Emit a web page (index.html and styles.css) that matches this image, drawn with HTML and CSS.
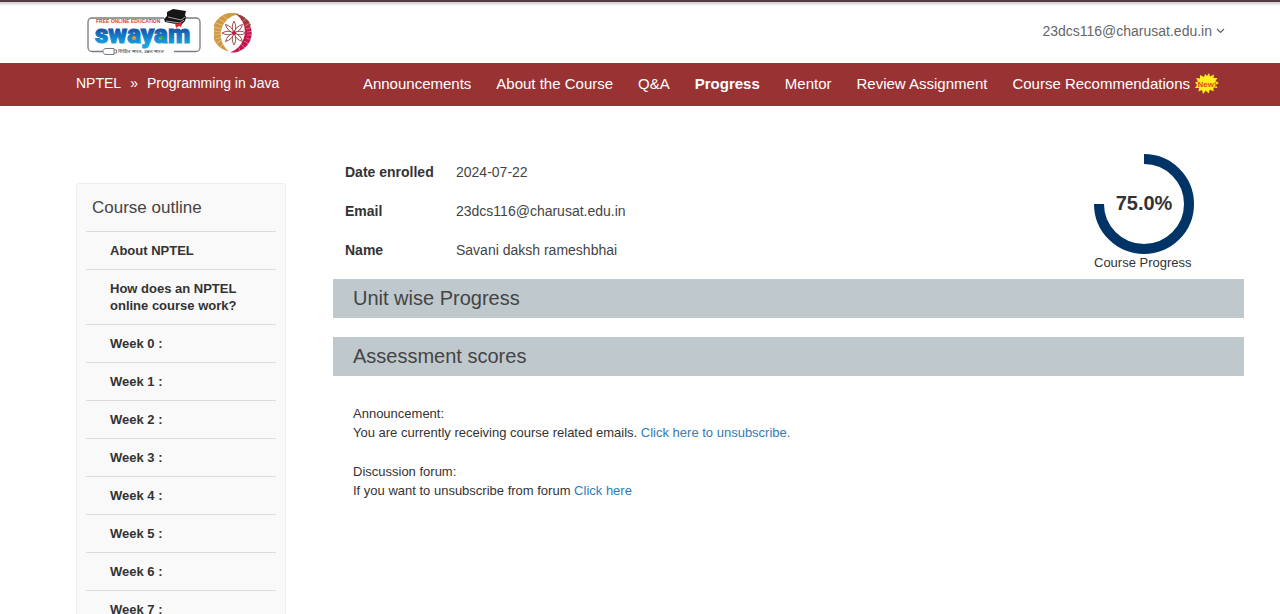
FILE: index.html
```html
<!DOCTYPE html>
<html lang="en">
<head>
<meta charset="utf-8">
<title>Programming in Java - Progress</title>
<link rel="stylesheet" href="styles.css">
</head>
<body>
<header class="topbar">
  <div class="brands">
    <a href="#" aria-label="Swayam">
      <svg class="logo-swayam" width="116" height="50" viewBox="0 0 116 50">
        <defs>
          <linearGradient id="blue" x1="0" y1="0" x2="0" y2="1">
            <stop offset="0.3" stop-color="#1a4fa0"/>
            <stop offset="0.55" stop-color="#1277c4"/>
            <stop offset="0.85" stop-color="#19a5e0"/>
          </linearGradient>
        </defs>
        <path d="M17 43.500H6a4 4 0 0 1-4-4V14a4 4 0 0 1 4-4h72M91 10h19a4 4 0 0 1 4 4v25.500a4 4 0 0 1-4 4H88" fill="none" stroke="#777b80" stroke-width="1.300"/>
        <path d="M20 40.500h8v6h-8c-4 0-4-6 0-6zM28 42h2.500v3H28" fill="#fff" stroke="#777b80"/>
        <text class="logo-tag" x="10" y="15">FREE ONLINE EDUCATION</text>
        <text class="logo-word" x="9" y="35">swayam</text>
        <circle cx="48" cy="30" r="2" fill="#f39322"/>
        <circle cx="76" cy="30" r="2" fill="#39a935"/>
        <text class="logo-hindi" x="32" y="45">शिक्षित भारत, उन्नत भारत</text>
        <path d="M81 4l6-3 13 2-1 4 1 2-1 4-4 4-16-3-1-3 3-3z" fill="#151515"/>
        <path d="M82 9l13 3 4-3M80 13l14 2 4-3" fill="none" stroke="#c5c5c5" stroke-width="0.800"/>
        <path d="M89 15l3 1 2-2 2 2-1 3-2-1-3 2z" fill="#e5262f"/>
      </svg>
    </a>
    <a href="#" aria-label="NPTEL">
      <svg class="logo-nptel" width="40" height="40" viewBox="0 0 40 40">
        <path d="M25 1A19.500 19.500 0 1 0 15 38.500A21 21 0 0 1 25 1z" fill="#cf9a45"/>
        <path d="M22 1A19.500 19.500 0 0 1 16 39.500A22 22 0 0 0 22 1z" fill="#c3164e"/>
        <path d="M22 1A19.500 19.500 0 0 1 37 12L32 15A22 22 0 0 0 22 1z" fill="#97413b"/>
        <g stroke="#fff" stroke-width="0.600" opacity="0.600">
          <path d="M0 14l8 2M0 18l7 1M0 22l7-1M1 26l7-2M3 30l6-4M6 34l5-5M2 10l8 3M5 6l6 4M9 3l5 4"/>
          <path d="M32 16l8-2M33 19l7-1M33 22l7 0M32 25l7 2M30 28l7 4M27 31l5 5M31 13l7-4M28 9l6-5M24 34l3 5"/>
        </g>
        <g fill="#fff" stroke="#96433f" stroke-width="0.900">
          <path d="M20 20q-3.500-6 0-12q3.500 6 0 12z"/>
          <path d="M20 20q-3.500-6 0-12q3.500 6 0 12z" transform="rotate(45 20 20)"/>
          <path d="M20 20q-3.500-6 0-12q3.500 6 0 12z" transform="rotate(90 20 20)"/>
          <path d="M20 20q-3.500-6 0-12q3.500 6 0 12z" transform="rotate(135 20 20)"/>
          <path d="M20 20q-3.500-6 0-12q3.500 6 0 12z" transform="rotate(180 20 20)"/>
          <path d="M20 20q-3.500-6 0-12q3.500 6 0 12z" transform="rotate(225 20 20)"/>
          <path d="M20 20q-3.500-6 0-12q3.500 6 0 12z" transform="rotate(270 20 20)"/>
          <path d="M20 20q-3.500-6 0-12q3.500 6 0 12z" transform="rotate(315 20 20)"/>
        </g>
        <circle cx="20" cy="20" r="2" fill="#c3164e"/>
      </svg>
    </a>
  </div>
  <button class="account" type="button">23dcs116@charusat.edu.in
    <svg width="9" height="6" viewBox="0 0 9 6"><path d="M1 1l3.500 3.500L8 1" fill="none" stroke="#666" stroke-width="1.200"/></svg>
  </button>
</header>

<div class="navbar">
  <div class="crumbs"><a href="#">NPTEL</a><span>»</span><a href="#">Programming in Java</a></div>
  <nav class="menu">
    <a href="#">Announcements</a>
    <a href="#">About the Course</a>
    <a href="#">Q&amp;A</a>
    <a href="#" class="active" aria-current="page">Progress</a>
    <a href="#">Mentor</a>
    <a href="#">Review Assignment</a>
    <a href="#" class="with-badge">Course Recommendations
      <svg width="24" height="22" viewBox="0 0 24 22">
        <path d="M12 3l2-3 1 3.500 4-2-.5 3.500 4 0-2 3 3.500 2-3.500 2 2 3-4-.5 0 4-3.500-2-1.500 4-2.500-3-3 3.500-1-4-3.500 1.500.5-3.500-4 0 2-3-2-2.500 3-1-2-3.500 4 .5 0-3.500 4 2 1-3z" fill="#ffed1f"/>
        <text class="badge-text" x="12" y="14" text-anchor="middle">New!</text>
      </svg>
    </a>
  </nav>
</div>

<div class="page">
  <aside class="outline">
    <h2>Course outline</h2>
    <ul>
      <li><a href="#">About NPTEL</a></li>
      <li><a href="#">How does an NPTEL online course work?</a></li>
      <li><a href="#">Week 0 :</a></li>
      <li><a href="#">Week 1 :</a></li>
      <li><a href="#">Week 2 :</a></li>
      <li><a href="#">Week 3 :</a></li>
      <li><a href="#">Week 4 :</a></li>
      <li><a href="#">Week 5 :</a></li>
      <li><a href="#">Week 6 :</a></li>
      <li><a href="#">Week 7 :</a></li>
    </ul>
  </aside>

  <main class="content">
    <section class="summary">
      <dl class="details">
        <dt>Date enrolled</dt><dd>2024-07-22</dd>
        <dt>Email</dt><dd>23dcs116@charusat.edu.in</dd>
        <dt>Name</dt><dd>Savani daksh rameshbhai</dd>
      </dl>
      <figure class="progress">
        <svg width="100" height="100" viewBox="0 0 100 100" role="img" aria-label="75.0%">
          <path d="M50 5A45 45 0 1 1 5 50" fill="none" stroke="#003366" stroke-width="10"/>
          <text class="percent" x="50" y="56" text-anchor="middle">75.0%</text>
        </svg>
        <figcaption>Course Progress</figcaption>
      </figure>
    </section>
    <h2 class="band">Unit wise Progress</h2>
    <h2 class="band">Assessment scores</h2>
    <section class="notices">
      <p>Announcement:<br>You are currently receiving course related emails. <a href="#">Click here to unsubscribe.</a></p>
      <p>Discussion forum:<br>If you want to unsubscribe from forum <a href="#">Click here</a></p>
    </section>
  </main>
</div>
</body>
</html>
```
FILE: styles.css
```css
* { box-sizing: border-box; }

body {
  margin: 0;
  background: #fff;
  color: #333;
  font-family: "Liberation Sans", Arial, sans-serif;
  font-size: 13px;
}

a { text-decoration: none; }
svg { display: block; }
h2, ul, dl, dd, p, figure { margin: 0; padding: 0; font-weight: normal; }

.topbar {
  display: flex;
  justify-content: space-between;
  align-items: center;
  height: 63px;
  padding: 0 55px 0 86px;
  border-top: 2px solid #523c46;
  background: linear-gradient(#ccc, #fff 4px);
}
.brands { display: flex; align-items: center; gap: 12px; }
.logo-tag { font-size: 5px; font-weight: bold; fill: #e33b36; }
.logo-word {
  font-family: Roboto, "Liberation Sans", sans-serif;
  font-size: 26px;
  font-weight: 900;
  fill: url(#blue);
  stroke: url(#blue);
  stroke-width: 1px;
}
.logo-hindi { font-family: "Noto Sans Devanagari", "Noto Sans", sans-serif; font-size: 5px; fill: #333; }

.account {
  display: flex;
  align-items: center;
  gap: 4px;
  padding: 0 0 3px;
  border: 0;
  background: none;
  color: #666;
  font-family: inherit;
  font-size: 14px;
}

.navbar {
  display: flex;
  justify-content: space-between;
  align-items: center;
  min-height: 43px;
  padding: 0 61px 2px 76px;
  background: #993333;
  color: #fff;
}
.navbar a { color: #fff; }
.crumbs { display: flex; gap: 9px; padding-bottom: 2px; font-size: 14px; }
.menu { display: flex; align-items: center; gap: 25px; font-size: 15px; }
.active { font-weight: bold; }
.with-badge { display: flex; align-items: center; gap: 5px; }
.badge-text { font-size: 8px; font-weight: bold; fill: #f04a16; }

.page { display: flex; align-items: flex-start; gap: 47px; padding: 48px 36px 0 76px; }

.outline {
  flex: 0 0 210px;
  margin-top: 29px;
  padding: 0 9px 20px;
  border: 1px solid #eee;
  border-radius: 3px;
  background: #f9f9f9;
}
.outline h2 { padding: 0 6px; font-size: 17px; line-height: 47px; color: #444; }
.outline ul { list-style: none; }
.outline li {
  padding: 10px 20px 10px 24px;
  border-top: 1px solid #ddd;
  line-height: 17px;
  font-weight: bold;
}
.outline li a { color: #333; }

.content { flex: 1; min-width: 0; }
.summary { display: flex; justify-content: space-between; padding: 0 50px 0 12px; }
.details {
  display: grid;
  grid-template-columns: 111px auto;
  align-content: start;
  font-size: 14px;
  line-height: 36px;
  row-gap: 3px;
}
.details dt { font-weight: bold; }
.details dd { color: #444; }
.progress { line-height: 17px; }
.percent { font-size: 20px; font-weight: bold; fill: #333; }

.band {
  margin: 8px 0 19px;
  padding: 0 20px;
  background: #bfc8cd;
  color: #444;
  font-size: 20px;
  line-height: 39px;
}
.band + .band { margin: 0; }

.notices { padding: 28px 20px; line-height: 19px; }
.notices p + p { margin-top: 20px; }
.notices a { color: #337ab7; }
```
